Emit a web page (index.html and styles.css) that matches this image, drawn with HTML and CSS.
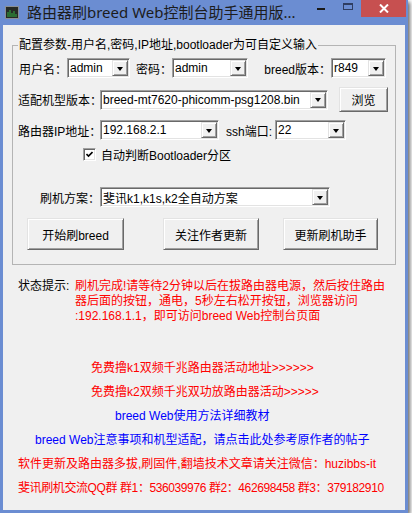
FILE: index.html
```html
<!DOCTYPE html>
<html lang="zh-CN">
<head>
    <meta charset="UTF-8">
    <meta name="viewport" content="width=device-width, initial-scale=1.0">
    <title>路由器刷breed Web控制台助手通用版</title>
    <link rel="stylesheet" href="styles.css">
</head>
<body>
    <div class="window">
        <div class="titlebar">
            <svg class="app-icon" width="14" height="13" viewBox="0 0 14 13">
                <rect x="0.5" y="0.5" width="13" height="12" fill="#262a26" stroke="#8a8f94"/>
                <path d="M3 11V6M5 11V4M7 11V7M9 11V5M11 11V8" stroke="#2f9a3c" stroke-width="1.2"/>
            </svg>
            <span class="title">路由器刷breed Web控制台助手通用版...</span>
            <span class="btn-min"></span>
            <span class="btn-max"></span>
            <span class="btn-close">
                <svg width="10" height="9" viewBox="0 0 10 9">
                    <path d="M1 0.5L9 8.5M9 0.5L1 8.5" stroke="#fff" stroke-width="2"/>
                </svg>
            </span>
        </div>

        <div class="client">
            <fieldset class="group">
                <legend>配置参数-用户名,密码,IP地址,bootloader为可自定义输入</legend>

                <div class="row row-user">
                    <span class="lbl lbl-user">用户名：</span>
                    <div class="combo combo-user"><span class="val">admin</span><span class="drop"></span></div>
                    <span class="lbl lbl-pass">密码：</span>
                    <div class="combo combo-pass"><span class="val">admin</span><span class="drop"></span></div>
                    <span class="lbl lbl-ver">breed版本：</span>
                    <div class="combo combo-ver"><span class="val">r849</span><span class="drop"></span></div>
                </div>

                <div class="row row-model">
                    <span class="lbl lbl-wide">适配机型版本：</span>
                    <div class="combo combo-model"><span class="val">breed-mt7620-phicomm-psg1208.bin</span><span class="drop"></span></div>
                    <button class="btn btn-browse">浏览</button>
                </div>

                <div class="row row-ip">
                    <span class="lbl lbl-wide">路由器IP地址：</span>
                    <div class="combo combo-ip"><span class="val">192.168.2.1</span><span class="drop"></span></div>
                    <span class="lbl lbl-ssh">ssh端口:</span>
                    <div class="combo combo-port"><span class="val">22</span><span class="drop"></span></div>
                </div>

                <div class="row row-check">
                    <span class="checkbox">
                        <svg width="7" height="7" viewBox="0 0 7 7">
                            <path d="M0.5 3L2.5 5L6.5 1" fill="none" stroke="#000" stroke-width="1.6"/>
                        </svg>
                    </span>
                    <span class="check-text">自动判断Bootloader分区</span>
                </div>

                <div class="row row-plan">
                    <span class="lbl lbl-wide">刷机方案：</span>
                    <div class="combo combo-plan"><span class="val">斐讯k1,k1s,k2全自动方案</span><span class="drop"></span></div>
                </div>

                <div class="row row-actions">
                    <button class="btn btn-start">开始刷breed</button>
                    <button class="btn btn-follow">关注作者更新</button>
                    <button class="btn btn-update">更新刷机助手</button>
                </div>
            </fieldset>

            <div class="status">
                <span class="status-label">状态提示:</span>
                <span class="status-text">刷机完成!请等待2分钟以后在拔路由器电源，然后按住路由<br>器后面的按钮，通电，5秒左右松开按钮，浏览器访问<br>:192.168.1.1，即可访问breed Web控制台页面</span>
            </div>

            <div class="links">
                <div class="link red link-k1">免费撸k1双频千兆路由器活动地址&gt;&gt;&gt;&gt;&gt;&gt;</div>
                <div class="link red link-k2">免费撸k2双频千兆双功放路由器活动&gt;&gt;&gt;&gt;&gt;</div>
                <div class="link blue link-guide">breed Web使用方法详细教材</div>
                <div class="link blue link-notes">breed Web注意事项和机型适配，请点击此处参考原作者的帖子</div>
                <div class="link red link-left">软件更新及路由器多拔,刷固件,翻墙技术文章请关注微信：huzibbs-it</div>
                <div class="link red link-left link-qq">斐讯刷机交流QQ群 群1：536039976 群2：462698458 群3：379182910</div>
            </div>
        </div>
    </div>
</body>
</html>
```

FILE: styles.css
```css
body {
    margin: 0;
    background: #fff;
    font-family: "Liberation Sans", "Noto Sans CJK SC", sans-serif;
    font-size: 12px;
    color: #000;
}

.window {
    width: 408px;
    height: 513px;
    background: #6b8dd2;
    box-shadow: 2px 2px 4px rgba(0, 0, 0, 0.6);
    display: flex;
    flex-direction: column;
}

/* title bar */

.titlebar {
    height: 25px;
    flex-shrink: 0;
    display: flex;
    align-items: flex-start;
}

.app-icon {
    margin: 6px 0 0 5px;
    flex-shrink: 0;
}

.title {
    flex: 1;
    margin-left: 8px;
    font-family: "Noto Sans", "Noto Sans CJK SC", sans-serif;
    font-size: 15px;
    line-height: 24px;
    color: #1c1c1c;
    white-space: nowrap;
    overflow: hidden;
}

.btn-min {
    width: 8px;
    height: 2px;
    margin: 8px 18px 0 0;
    background: #1a1a1a;
}

.btn-max {
    width: 10px;
    height: 7px;
    box-sizing: border-box;
    margin: 3px 8px 0 0;
    border: 1px solid #2e3d62;
    border-top-width: 2px;
}

.btn-close {
    width: 45px;
    height: 17px;
    margin-right: 2px;
    background: #c75050;
    display: flex;
    align-items: center;
    justify-content: center;
}

/* client area */

.client {
    flex: 1;
    margin: 0 3px 3px;
    background: #f0f0f0;
    padding: 13px 0 0 9px;
}

.group {
    width: 384px;
    box-sizing: border-box;
    margin: 0;
    padding: 0 0 14px 5px;
    border: 1px solid #b4b4b4;
}

.group legend {
    padding: 0 1px;
    line-height: 14px;
}

.row {
    display: flex;
    align-items: center;
}

.row-user {
    margin-top: 6px;
    height: 20px;
}

.row-model {
    margin-top: 9px;
    height: 25px;
}

.row-ip {
    margin-top: 8px;
    height: 20px;
}

.row-check {
    margin-top: 8px;
    height: 13px;
    padding-left: 65px;
}

.row-plan {
    margin-top: 26px;
    height: 20px;
}

.row-actions {
    margin-top: 11px;
    height: 32px;
    padding-left: 9px;
}

.lbl {
    flex-shrink: 0;
    text-align: right;
    white-space: nowrap;
}

.lbl-user { width: 49px; }
.lbl-pass { width: 42px; }
.lbl-ver { width: 83px; }
.lbl-wide { width: 82px; }
.lbl-ssh { width: 53px; padding-right: 3px; }

/* combo boxes */

.combo {
    height: 20px;
    box-sizing: border-box;
    flex-shrink: 0;
    display: flex;
    align-items: center;
    padding: 1px;
    background: #fff;
    border: 1px solid;
    border-color: #a0a0a0 #fff #fff #a0a0a0;
    box-shadow: inset 1px 1px 0 #696969, inset -1px -1px 0 #e3e3e3;
}

.combo .val {
    flex: 1;
    padding-left: 1px;
    white-space: nowrap;
    overflow: hidden;
}

.drop {
    width: 16px;
    height: 16px;
    box-sizing: border-box;
    flex-shrink: 0;
    display: flex;
    align-items: center;
    justify-content: center;
    background: #f0f0f0;
    border: 1px solid;
    border-color: #e3e3e3 #696969 #696969 #e3e3e3;
    box-shadow: inset 1px 1px 0 #fff, inset -1px -1px 0 #a0a0a0;
}

.drop::after {
    content: "";
    border-left: 3.5px solid transparent;
    border-right: 3.5px solid transparent;
    border-top: 4px solid #000;
    margin-top: 1px;
}

.combo-user { width: 63px; }
.combo-pass { width: 76px; }
.combo-ver { width: 55px; }
.combo-model { width: 228px; }
.combo-ip { width: 119px; }
.combo-port { width: 71px; }
.combo-plan { width: 230px; }

/* buttons */

.btn {
    box-sizing: border-box;
    flex-shrink: 0;
    padding: 0;
    font: inherit;
    color: #000;
    background: #f0f0f0;
    border: 1px solid;
    border-color: #e3e3e3 #696969 #696969 #e3e3e3;
    box-shadow: inset 1px 1px 0 #fff, inset -1px -1px 0 #a0a0a0;
}

.btn-browse {
    width: 49px;
    height: 25px;
    margin-left: 11px;
}

.btn-start,
.btn-follow,
.btn-update {
    height: 32px;
}

.btn-start { width: 97px; }

.btn-follow {
    width: 96px;
    margin-left: 39px;
}

.btn-update {
    width: 95px;
    margin-left: 24px;
}

/* checkbox */

.checkbox {
    width: 13px;
    height: 13px;
    box-sizing: border-box;
    display: flex;
    align-items: center;
    justify-content: center;
    background: #fff;
    border: 1px solid;
    border-color: #a0a0a0 #fff #fff #a0a0a0;
    box-shadow: inset 1px 1px 0 #696969, inset -1px -1px 0 #e3e3e3;
}

.check-text {
    margin-left: 5px;
    white-space: nowrap;
}

/* status + links */

.status {
    display: flex;
    margin: 14px 0 0 6px;
    line-height: 15px;
}

.status-label {
    width: 57px;
    flex-shrink: 0;
}

.status-text {
    color: #f00;
    white-space: nowrap;
}

.links {
    margin-top: 32px;
}

.link {
    line-height: 24px;
    white-space: nowrap;
}

.red { color: #f00; }
.blue { color: #00f; }

.link-k1,
.link-k2 { margin-left: 79px; }
.link-guide { margin-left: 103px; }
.link-notes { margin-left: 23px; }
.link-left { margin-left: 6px; }
.link-qq { letter-spacing: -0.4px; }
```
